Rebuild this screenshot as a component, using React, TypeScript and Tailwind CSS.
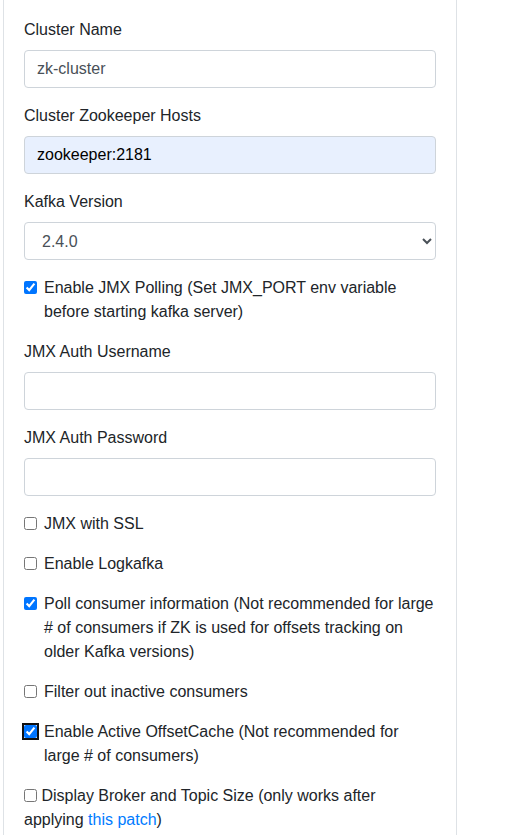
import type { ReactNode } from 'react';

const INPUT =
  'block w-full h-[38px] rounded border border-[#ced4da] bg-white px-3 py-1.5 text-base leading-6 text-[#495057]';

function Field({ label, children }: { label: string; children: ReactNode }) {
  return (
    <div className="mb-4">
      <label className="mb-2 block leading-6">{label}</label>
      {children}
    </div>
  );
}

function Check({
  checked,
  focused,
  children,
}: {
  checked?: boolean;
  focused?: boolean;
  children: ReactNode;
}) {
  return (
    <div className="mb-4">
      <div className="relative pl-5">
        <input
          type="checkbox"
          defaultChecked={checked}
          className={`absolute -ml-5 mt-[4.8px] h-[13px] w-[13px] ${
            focused ? 'rounded-sm outline-2 outline-offset-0 outline-[#101010]' : ''
          }`}
        />
        <label className="block leading-6">{children}</label>
      </div>
    </div>
  );
}

export default function App() {
  return (
    <div className="min-h-screen bg-white font-['Liberation_Sans',Arial,sans-serif] text-base text-[#212529]">
      <div className="ml-[3px] min-h-screen w-[454px] border-x border-[#dee2e6] bg-white px-5 pt-[18px]">
        <Field label="Cluster Name">
          <input type="text" defaultValue="zk-cluster" className={INPUT} />
        </Field>
        <Field label="Cluster Zookeeper Hosts">
          <input
            type="text"
            defaultValue="zookeeper:2181"
            className={`${INPUT} !bg-[#e8f0fe] !text-black`}
          />
        </Field>
        <Field label="Kafka Version">
          <select defaultValue="2.4.0" className={`${INPUT} pl-[13px]`}>
            <option value="2.4.0">2.4.0</option>
          </select>
        </Field>
        <Check checked>Enable JMX Polling (Set JMX_PORT env variable before starting kafka server)</Check>
        <Field label="JMX Auth Username">
          <input type="text" className={INPUT} />
        </Field>
        <Field label="JMX Auth Password">
          <input type="password" className={INPUT} />
        </Field>
        <Check>JMX with SSL</Check>
        <Check>Enable Logkafka</Check>
        <Check checked>
          Poll consumer information (Not recommended for large # of consumers if ZK is used for offsets
          tracking on older Kafka versions)
        </Check>
        <Check>Filter out inactive consumers</Check>
        <Check checked focused>
          Enable Active OffsetCache (Not recommended for large # of consumers)
        </Check>
        <div className="mb-4">
          <label className="leading-6">
            <input type="checkbox" className="h-[13px] w-[13px] align-[-1px]" /> Display Broker and Topic
            Size (only works after applying{' '}
            <a href="#" className="text-[#007bff]">
              this patch
            </a>
            )
          </label>
        </div>
      </div>
    </div>
  );
}
